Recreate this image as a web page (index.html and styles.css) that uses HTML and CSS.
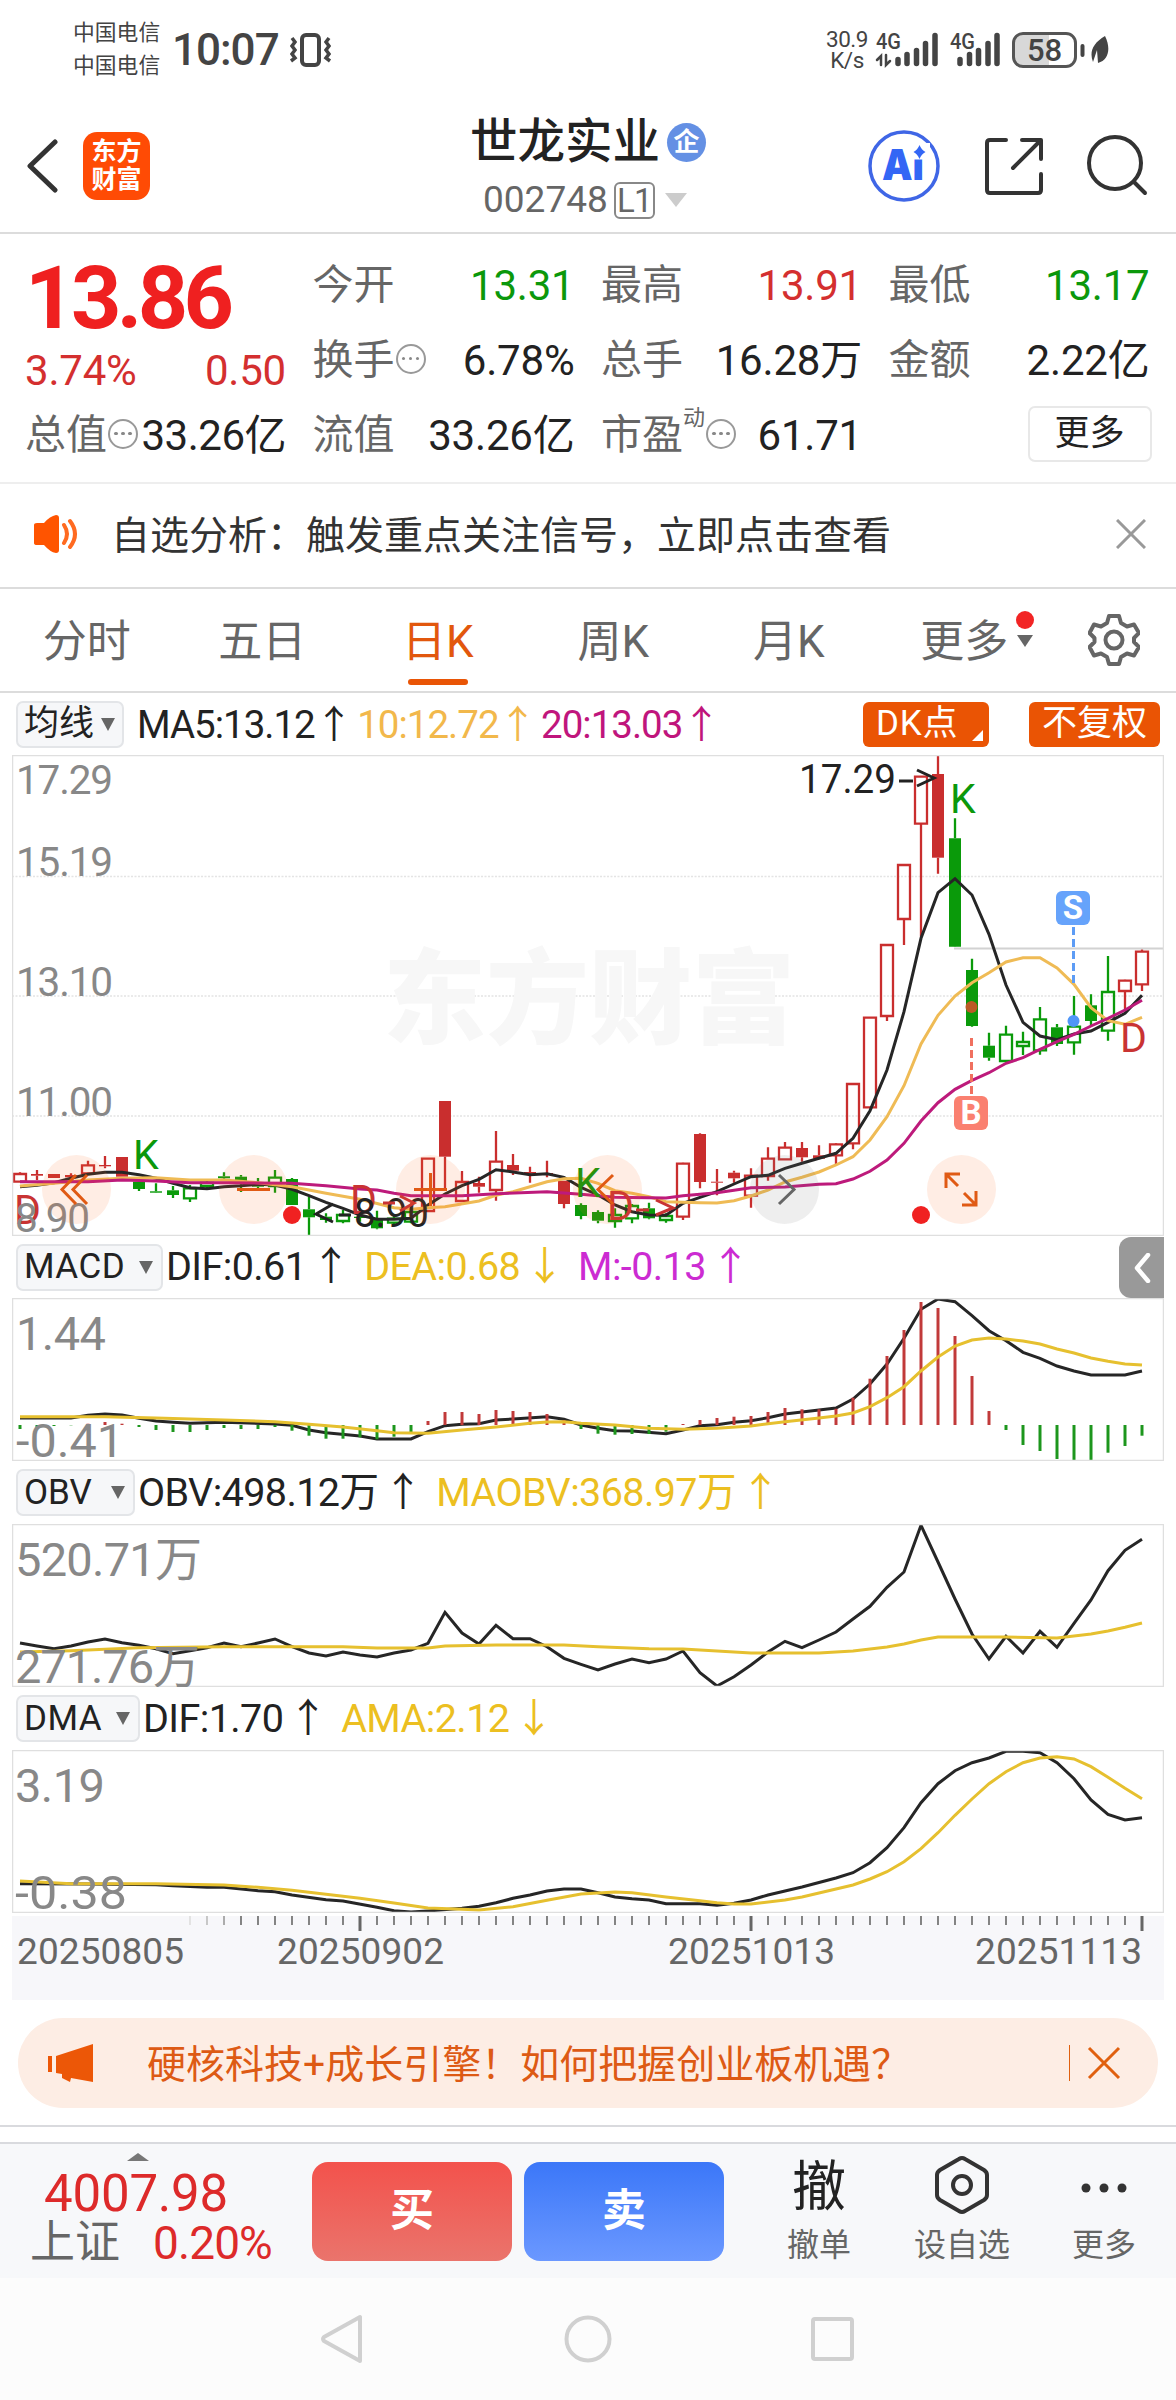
FILE: index.html
```html
<!DOCTYPE html>
<html lang="zh-CN">
<head>
<meta charset="utf-8">
<title>世龙实业 002748</title>
<link rel="stylesheet" href="styles.css">
</head>
<body>
<div class="phone">
  <div class="status">
    <div class="carriers"><span>中国电信</span><span>中国电信</span></div>
    <span class="clock">10:07</span>
    <svg class="vibrate" width="44" height="36" viewBox="0 0 44 36" fill="none" stroke="#444" stroke-width="4"><rect x="13" y="3" width="17" height="30" rx="4"/><path d="M3 6l3 4-3 4 3 4-3 4 3 4-4 3M40 6l-3 4 3 4-3 4 3 4-3 4 4 3" stroke-width="3.500"/></svg>
    <div class="speed"><span>30.9</span><span>K/s</span></div>
    <svg class="signals" width="130" height="46" viewBox="0 0 130 46"><g fill="none" stroke="#444" stroke-width="5.500" stroke-linecap="round"><path d="M24 36.500v-4M33 36.500v-9M42.500 36.500v-13M51.500 36.500v-20M61 36.500v-28M86 36.500v-4M95.500 36.500v-9M104.500 36.500v-13M114 36.500v-20M123 36.500v-28"/><path d="M7 38V29l-4 4M12 28v10l4-4" stroke-width="2.500"/></g><text x="2" y="22" textLength="25" lengthAdjust="spacingAndGlyphs">4G</text><text x="76" y="22" textLength="25" lengthAdjust="spacingAndGlyphs">4G</text></svg>
    <div class="battery"><span>58</span></div>
    <svg class="leaf" width="30" height="36" viewBox="0 0 30 36"><path d="M3.500 14v9" stroke="#444" stroke-width="4" stroke-linecap="round"/><path d="M26 4C14 11 10 20 14 30l4-12 1 13C30 28 32 16 26 4z" fill="#444"/></svg>
  </div>

  <header class="head">
    <svg class="back" width="32" height="58" viewBox="0 0 32 58" fill="none" stroke="#333" stroke-width="5" stroke-linecap="round" stroke-linejoin="round"><path d="M29 5L4 29l25 24"/></svg>
    <div class="logo"><span>东方</span><span>财富</span></div>
    <div class="title">
      <div class="name">世龙实业<i class="badge">企</i></div>
      <div class="code">002748<span class="lv">L1</span><svg width="22" height="16" viewBox="0 0 22 16"><path d="M0 1h22L11 15z" fill="#ccc"/></svg></div>
    </div>
    <svg class="ai" width="72" height="74" viewBox="0 0 72 74"><circle cx="36" cy="37" r="34" fill="none" stroke="#3f66e6" stroke-width="3.500"/><text x="14" y="51" textLength="42" lengthAdjust="spacingAndGlyphs">Ai</text><path d="M42 14h20v16.500H42z" fill="#fff"/><path d="M51.500 16q2 5 6 7-4 2-6 7-2-5-6-7 4-2 6-7z" fill="#3366f5"/></svg>
    <svg class="share" width="62" height="62" viewBox="0 0 62 62" fill="none" stroke="#333" stroke-width="4" stroke-linecap="round" stroke-linejoin="round"><path d="M24 5H8q-3 0-3 3v47q0 3 3 3h48q3 0 3-3V39M40 5h19v19M58 6L31 33"/></svg>
    <svg class="search" width="62" height="62" viewBox="0 0 62 62" fill="none" stroke="#333" stroke-width="4" stroke-linecap="round"><circle cx="29" cy="29" r="26"/><path d="M48 48l11 11"/></svg>
  </header>

  <section class="quote">
    <div class="col first">
      <div class="price">13.86</div>
      <div class="cell chg"><b class="red">3.74%</b><b class="red">0.50</b></div>
      <div class="cell tight"><span>总值</span><i class="tip"></i><b>33.26亿</b></div>
    </div>
    <div class="col">
      <div class="cell"><span>今开</span><b class="green">13.31</b></div>
      <div class="cell"><span>换手</span><i class="tip"></i><b>6.78%</b></div>
      <div class="cell"><span>流值</span><b>33.26亿</b></div>
    </div>
    <div class="col">
      <div class="cell"><span>最高</span><b class="red">13.91</b></div>
      <div class="cell"><span>总手</span><b>16.28万</b></div>
      <div class="cell"><span>市盈<sup>动</sup></span><i class="tip"></i><b>61.71</b></div>
    </div>
    <div class="col">
      <div class="cell"><span>最低</span><b class="green">13.17</b></div>
      <div class="cell"><span>金额</span><b>2.22亿</b></div>
      <div class="cell"><button class="morebtn">更多</button></div>
    </div>
  </section>

  <div class="notice">
    <svg width="46" height="38" viewBox="0 0 46 38"><path d="M1 10q0-2 3-2h7q6-7 12-8 3 0 3 3v32q0 3-3 3-6-1-12-8H4q-3 0-3-2z" fill="#ff5400"/><path d="M31 10q6 9 0 18M37 6q10 13 0 26" fill="none" stroke="#ff6a20" stroke-width="4" stroke-linecap="round"/></svg>
    <span>自选分析：触发重点关注信号，立即点击查看</span>
    <svg class="x" width="30" height="30" viewBox="0 0 30 30" stroke="#999" stroke-width="3"><path d="M1 1l28 28M29 1L1 29"/></svg>
  </div>

  <nav class="tabs">
    <span>分时</span><span>五日</span><span class="on">日K</span><span>周K</span><span>月K</span>
    <span>更多<i class="dot"></i><i class="caret"></i></span>
    <svg width="52" height="54" viewBox="0 0 52 54" fill="none" stroke="#666" stroke-width="4" stroke-linejoin="round"><path d="M21 3h10l2 7 6 3.500 7-2 5 8.500-5 5v4l5 5-5 8.500-7-2-6 3.500-2 7H21l-2-7-6-3.500-7 2L1.500 34l5-5v-4l-5-5L6 11.500l7 2L19 10z"/><circle cx="26" cy="27" r="8.500"/></svg>
  </nav>

  <div class="legend ma">
    <span class="pick">均线<i></i></span>
    <span class="t k">MA5:13.12↑</span><span class="t o">10:12.72↑</span><span class="t m">20:13.03↑</span>
    <span class="tag dk">DK点<i></i></span><span class="tag">不复权</span>
  </div>

  <svg class="plot" width="1152" height="481" viewBox="12 755 1152 481">
    <path d="M12 876.500h1152M12 996h1152M12 1116h1152" stroke="#e4e4e4" stroke-width="1.500" stroke-dasharray="2 1.500"/>
    <text class="water" x="383" y="1036" textLength="412">东方财富</text>
    <g id="candles"></g>
    <path d="M954 948.500h210" stroke="#d2d2d2" stroke-width="2"/>
    <g id="ma"></g>
    <rect x="12.500" y="755.500" width="1151" height="480" fill="none" stroke="#dfdfdf" stroke-width="1.500"/>
    <g class="mark">
      <text class="gr" x="133" y="1169">K</text><text class="gr" x="575" y="1197">K</text><text class="gr" x="950" y="813">K</text>
      <text class="rd" x="14" y="1224">D</text><text class="rd" x="350" y="1214">D</text><text class="rd" x="607" y="1220">D</text><text class="rd" x="1120" y="1052">D</text>
      <text x="799" y="793" textLength="97" lengthAdjust="spacingAndGlyphs">17.29</text>
      <text x="354" y="1227" textLength="75" lengthAdjust="spacingAndGlyphs">8.90</text>
    </g>
    <g fill="none" stroke="#222" stroke-width="3"><path d="M899 781h14M917 770l17 8-17 8M333 1204l-17 10 17 8M339 1215h12"/><path d="M636 1210h13M656 1200l17 8-17 7M383 1203h12M400 1196l14 7-14 8" stroke="#c93333"/></g>
    <g class="axis">
      <text x="16" y="794" textLength="97">17.29</text><text x="16" y="876" textLength="97">15.19</text><text x="16" y="996" textLength="97">13.10</text><text x="16" y="1116" textLength="97">11.00</text><text x="15" y="1232" textLength="75">8.90</text>
    </g>
    <g fill="#ff6a20" fill-opacity=".12"><circle cx="76.500" cy="1189.500" r="34.500"/><circle cx="253.500" cy="1189.500" r="34.500"/><circle cx="430.500" cy="1189.500" r="34.500"/><circle cx="607.500" cy="1189.500" r="34.500"/><circle cx="961.500" cy="1189.500" r="34.500"/><circle cx="784.500" cy="1189.500" r="34.500" fill="#777"/></g>
    <g fill="none" stroke="#e05a14" stroke-width="3"><path d="M76 1175l-14 14.500 14 14.500M87 1175l-14 14.500 14 14.500M237 1189.500h33M414 1189.500h33M430.500 1173v33M613 1175l-15 14.500 15 14.500M958 1186l-12-12M946 1188v-14h14M964 1193l12 12M976 1191v14h-14"/><path d="M779 1175l15 14.500-15 14.500" stroke="#666"/></g>
    <g fill="#f02121"><circle cx="292" cy="1215" r="9"/><circle cx="921" cy="1215" r="9"/></g>
    <path d="M1073.500 927v56" stroke="#5d9cf5" stroke-width="3" stroke-dasharray="8 4"/>
    <path d="M971.500 1038v56" stroke="#f0705f" stroke-width="3" stroke-dasharray="8 4"/>
    <circle cx="1073.500" cy="1021" r="6" fill="#4f96f8"/><circle cx="971.500" cy="1007" r="6" fill="#bb5a26"/>
    <rect x="1056" y="891" width="34" height="34" rx="6" fill="#66a3fb"/><rect x="954" y="1096" width="34" height="34" rx="6" fill="#fa8070"/>
    <g class="sig"><text x="1073" y="919">S</text><text x="971" y="1124">B</text></g>
  </svg>

  <div class="legend first">
    <span class="pick w1">MACD<i></i></span>
    <span class="t k">DIF:0.61<u>↑</u></span><span class="t y">DEA:0.68<u>↓</u></span><span class="t p">M:-0.13<u>↑</u></span>
    <span class="fold"><svg width="18" height="30" viewBox="0 0 18 30" fill="none" stroke="#fff" stroke-width="4.500" stroke-linecap="round" stroke-linejoin="round"><path d="M15 2L4 15l11 13"/></svg></span>
  </div>
  <svg class="plot" width="1152" height="163" viewBox="12 1298 1152 163">
    <g id="macd"></g><rect x="12.500" y="1298.500" width="1151" height="162" fill="none" stroke="#dfdfdf" stroke-width="1.500"/>
    <g class="axis big"><text x="16" y="1350" textLength="90">1.44</text><text x="16" y="1457" textLength="108" lengthAdjust="spacingAndGlyphs">-0.41</text></g>
  </svg>

  <div class="legend">
    <span class="pick w2">OBV<i></i></span>
    <span class="t k">OBV:498.12万<u>↑</u></span><span class="t y">MAOBV:368.97万<u>↑</u></span>
  </div>
  <svg class="plot" width="1152" height="163" viewBox="12 1524 1152 163">
    <g id="obv"></g><rect x="12.500" y="1524.500" width="1151" height="162" fill="none" stroke="#dfdfdf" stroke-width="1.500"/>
    <g class="axis big"><text x="15" y="1576" textLength="187">520.71万</text><text x="15" y="1683" textLength="185">271.76万</text></g>
  </svg>

  <div class="legend">
    <span class="pick w3">DMA<i></i></span>
    <span class="t k">DIF:1.70<u>↑</u></span><span class="t y">AMA:2.12<u>↓</u></span>
  </div>
  <svg class="plot" width="1152" height="163" viewBox="12 1750 1152 163">
    <g id="dma"></g><rect x="12.500" y="1750.500" width="1151" height="162" fill="none" stroke="#dfdfdf" stroke-width="1.500"/>
    <g class="axis big"><text x="15" y="1802" textLength="90">3.19</text><text x="15" y="1909" textLength="112" lengthAdjust="spacingAndGlyphs">-0.38</text></g>
  </svg>

  <svg class="dates" width="1152" height="84" viewBox="12 1916 1152 84">
    <g id="ticks"></g>
    <text x="17" y="1964" textLength="167">20250805</text><text x="277" y="1964" textLength="167">20250902</text><text x="668" y="1964" textLength="167">20251013</text><text x="975" y="1964" textLength="167">20251113</text>
  </svg>

  <div class="banner">
    <svg width="48" height="40" viewBox="0 0 48 40" fill="#ec5707"><path d="M1 13h4v16H1zM9 13L46 1v38l-22-4-1 4-8-4v-4l-6-1z"/></svg>
    <span>硬核科技+成长引擎！如何把握创业板机遇？</span>
    <i></i>
    <svg width="34" height="34" viewBox="0 0 34 34" stroke="#e0600f" stroke-width="3"><path d="M2 2l30 30M32 2L2 32"/></svg>
  </div>

  <footer class="bar">
    <div class="index">
      <svg width="22" height="8" viewBox="0 0 22 8"><path d="M0 8L11 0l11 8z" fill="#777"/></svg>
      <b>4007.98</b>
      <div><span>上证</span><em>0.20%</em></div>
    </div>
    <button class="buy">买</button><button class="sell">卖</button>
    <div class="act a1"><b>撤</b><span>撤单</span></div>
    <div class="act a2"><svg width="56" height="60" viewBox="0 0 56 60" fill="none" stroke="#333" stroke-width="4" stroke-linejoin="round"><path d="M25 4q3-2 6 0l19 11q3 2 3 5v20q0 3-3 5L31 56q-3 2-6 0L6 45q-3-2-3-5V20q0-3 3-5z"/><circle cx="28" cy="30" r="9"/></svg><span>设自选</span></div>
    <div class="act a3"><svg width="56" height="60" viewBox="0 0 56 60" fill="#333"><circle cx="10" cy="33" r="4.500"/><circle cx="28" cy="33" r="4.500"/><circle cx="46" cy="33" r="4.500"/></svg><span>更多</span></div>
  </footer>
  <div class="keys">
    <svg width="46" height="50" viewBox="0 0 46 50"><path d="M40 3v44L4 27q-2-2 0-4z"/></svg>
    <svg width="50" height="50" viewBox="0 0 50 50"><circle cx="25" cy="25" r="21.500"/></svg>
    <svg width="46" height="50" viewBox="0 0 46 50"><rect x="3" y="5" width="39" height="40" rx="2"/></svg>
  </div>
</div>
<script src="chart.js"></script>
</body>
</html>
```
FILE: styles.css
```css
* { box-sizing: border-box; }
body { margin: 0; background: #fff; font-family: Roboto, "Noto Sans CJK SC", sans-serif; color: #222; }
i, em { font-style: normal; }
u { text-decoration: none; margin: 0 4px 0 5px; }
b { font-weight: 400; }
button { font: inherit; border: 0; padding: 0; margin: 0; }
svg { display: block; flex: none; }
.phone { width: 1176px; height: 2400px; overflow: hidden; display: flex; flex-direction: column; }
.phone > * { flex: none; }
.red { color: #d42f2f; }
.green { color: #0b980b; }

.status { height: 100px; display: flex; align-items: center; padding: 0 67px 0 73px; color: #444; }
.carriers { display: flex; flex-direction: column; font-size: 21.8px; line-height: 33px; width: 99px; padding-bottom: 2px; }
.clock { font-size: 44px; font-weight: 500; letter-spacing: -1px; width: 117px; line-height: 98px; }
.vibrate { margin-right: auto; }
.speed { display: flex; flex-direction: column; font-size: 22.5px; line-height: 21px; text-align: center; width: 44px; margin-right: 5px; letter-spacing: -0.5px; }
.signals { margin-right: 8px; }
.signals text { font-size: 22px; font-weight: 500; fill: #444; }
.battery { width: 65px; height: 36px; border: 3px solid #555; border-radius: 11px; background: linear-gradient(90deg, #d8d8d8 58%, #fff 58%); font-size: 31px; font-weight: 500; line-height: 31px; text-align: center; margin-right: 2px; }

.head { height: 134px; border-bottom: 2px solid #dcdcdc; display: flex; padding: 0 28px 0 26px; align-items: flex-start; }
.back { margin-top: 37px; }
.logo { width: 67px; height: 68px; margin: 32px 0 0 25px; border-radius: 14px; background: #ff4b05; color: #fff; font-size: 25px; font-weight: 700; line-height: 28px; padding-top: 6px; display: flex; flex-direction: column; align-items: center; }
.title { flex: 1; padding-left: 320px; }
.name { font-size: 47.5px; font-weight: 500; line-height: 60px; padding-top: 12px; display: flex; align-items: center; }
.badge { width: 39px; height: 39px; border-radius: 50%; background: #6490e4; color: #fff; font-size: 26px; line-height: 38px; text-align: center; margin-left: 7px; font-weight: 700; }
.code { display: flex; align-items: center; font-size: 37px; line-height: 56px; color: #666; padding-left: 13px; }
.lv { border: 2px solid #888; border-radius: 6px; width: 41px; height: 37px; line-height: 34px; font-size: 33px; text-align: center; letter-spacing: -1px; margin: 0 10px 0 6px; }
.ai { margin: 29px 42px 0 0; }
.ai text { font-family: Inter, sans-serif; font-size: 42px; font-weight: 900; fill: #3366f5; }
.share { margin: 35px 42px 0 0; }
.search { margin-top: 34px; }

.quote { height: 250px; border-bottom: 2px solid #eee; padding: 14px 26px 0 25px; display: grid; grid-template-columns: 261px 262px 261px 261px; column-gap: 26.5px; }
.cell { height: 75px; display: flex; align-items: center; font-size: 42px; line-height: 75px; letter-spacing: -0.2px; white-space: nowrap; }
.cell span { color: #666; letter-spacing: 0; font-size: 41px; }
.cell b { margin-left: auto; }
.tight b { letter-spacing: -0.5px; }
.price { font-size: 88px; font-weight: 700; letter-spacing: -4.6px; line-height: 100px; color: #ef2020; height: 92px; padding-left: 0; }
.cell.chg { height: 58px; justify-content: space-between; line-height: 62px; padding-top: 3px; }
.chg b { margin: 0; }
.tip { width: 30px; height: 30px; border: 2px solid #999; border-radius: 50%; margin: -4px 0 0 1px; display: flex; align-items: center; justify-content: center; flex: none; }
.tip::before { content: ""; width: 3.5px; height: 3.5px; border-radius: 50%; background: #888; box-shadow: -7px 0 #888, 7px 0 #888; }
.cell sup { font-size: 22px; line-height: 0; vertical-align: 24px; }
.morebtn { width: 124px; height: 56px; margin: -4px -2px 0 auto; background: #fff; border: 2px solid #e8e8e8; border-radius: 7px; font-size: 35px; line-height: 50px; color: #222; }

.notice { height: 105px; border-bottom: 2px solid #dcdcdc; display: flex; align-items: center; padding: 0 30px 3px 33px; font-size: 39px; color: #333; }
.notice span { margin: -5px 0 0 32px; }
.notice .x { margin-left: auto; }

.tabs { height: 104px; border-bottom: 2px solid #dcdcdc; display: flex; align-items: center; font-size: 44px; color: #666; }
.tabs span { width: 175.5px; text-align: center; line-height: 107px; height: 102px; position: relative; left: -1px; }
.tabs .on { color: #e2570d; }
.tabs .on::after { content: ""; position: absolute; left: 58px; bottom: 6px; width: 60px; height: 6px; border-radius: 3px; background: #e95506; }
.tabs svg { margin-left: 35px; }
.dot { position: absolute; left: 139px; top: 22px; width: 18px; height: 18px; border-radius: 50%; background: #f22424; }
.caret { position: absolute; left: 140px; top: 46px; border: 8px solid transparent; border-top: 12px solid #666; border-bottom: 0; }

.legend { height: 63px; display: flex; align-items: center; padding: 0 16px; position: relative; white-space: nowrap; }
.legend.ma, .legend.first { height: 62px; }
.pick { height: 47px; border: 2px solid #e3e5e8; border-radius: 7px; background: #f6f7f9; padding: 0 6px; font-size: 35px; line-height: 42px; display: flex; align-items: center; justify-content: space-between; }
.pick i { border: 7.5px solid transparent; border-top: 13px solid #666; border-bottom: 0; }
.ma .pick { width: 108px; margin-right: 13px; padding: 0 7px 0 6px; }
.w1 { width: 147px; margin-right: 3px; padding-right: 8px; letter-spacing: 0.5px; }
.w2 { width: 119px; margin-right: 3px; padding-right: 8px; }
.w3 { width: 124px; margin-right: 3px; padding-right: 8px; letter-spacing: 0.5px; }
.t { font-size: 39.5px; letter-spacing: -0.6px; line-height: 59px; margin: -1px 10px 0 0; }
.ma .t { font-size: 38.5px; letter-spacing: -1px; margin-right: 5px; line-height: 61px; margin-top: 0; }
.k { color: #222; } .o { color: #f2b84b; } .m { color: #c0157c; } .y { color: #ecbf21; } .p { color: #cc2bd2; }
.tag { background: #ea5404; color: #fff; border-radius: 6px; height: 45px; line-height: 43px; font-size: 35px; padding: 0 13px; position: relative; }
.dk { margin-left: auto; margin-right: 40px; width: 126px; letter-spacing: 0.8px; }
.dk i { position: absolute; right: 6px; bottom: 6px; border-bottom: 11px solid #fff; border-left: 11px solid transparent; }
.fold { position: absolute; right: 12px; top: 1px; width: 45px; height: 61px; border-radius: 12px 0 0 12px; background: #999; display: flex; align-items: center; justify-content: center; }

.plot { margin-left: 12px; }
.water { font-size: 103px; font-weight: 900; fill: #f7f7f7; }
.mark text { font-size: 41px; fill: #222; }
.mark .gr { fill: #0b980b; }
.mark .rd { fill: #c93333; }
.axis text { font-size: 40.5px; fill: #888; }
.axis.big text { font-size: 47px; }
.sig text { font-size: 33px; font-weight: 700; fill: #fff; text-anchor: middle; }
.dates { margin: 3px 0 0 12px; background: #f7f7fa; }
.dates text { font-size: 37px; fill: #666; }

.banner { margin: 18px 18px 0; height: 90px; border-radius: 45px; background: #fdede4; display: flex; align-items: center; padding: 0 37px 0 29px; color: #dd5a14; font-size: 39px; }
.banner span { margin: -5px 0 0 52px; }
.banner i { width: 1.5px; height: 36px; background: #e0600f; margin: 0 17px 0 auto; }

.bar { margin-top: 17px; height: 153px; border-top: 2px solid #d9dade; background: linear-gradient(#fff 0 15px, #d9dade 15px 17px, #f7f8fa 17px); padding: 16px 0 0; display: flex; }
.index { width: 312px; position: relative; display: flex; flex-direction: column; }
.index svg { margin: 10px 0 0 127px; }
.index b { font-size: 51px; line-height: 58px; margin: 4px 0 0 44px; letter-spacing: -0.2px; color: #dd2a2a; }
.index div { display: flex; align-items: center; padding-left: 30px; line-height: 44px; margin-top: -2px; }
.index span { font-size: 45px; color: #666; }
.index em { font-size: 46px; margin-left: 33px; color: #dd2a2a; letter-spacing: -0.9px; }
.bar button { width: 200px; height: 99px; border-radius: 16px; margin: 19px 12px 0 0; color: #fff; font-size: 44px; font-weight: 700; line-height: 97px; }
.buy { background: linear-gradient(#f3524c, #ea746c); }
.sell { background: linear-gradient(#3b77f8, #6b98ff); }
.act { display: flex; flex-direction: column; align-items: center; font-size: 32px; color: #666; padding-top: 12px; height: 136px; }
.act b { font-size: 54px; line-height: 64px; color: #222; padding-top: 1px; height: 64px; }
.act svg { margin-bottom: 4px; }
.act span { line-height: 53px; }
.a1 { width: 146px; margin-left: 10px; }
.a2 { width: 140px; }
.a3 { width: 144px; }
.keys { height: 122px; background: #fcfcfc; display: flex; align-items: center; padding-left: 320px; gap: 197px; }
.keys svg { fill: none; stroke: #d0d0d0; stroke-width: 4; stroke-linejoin: round; }
```
FILE: chart.js
```js
// Sessions are 17px apart, starting at x=20; heights are kept in thirds of a pixel.
const NS = 'http://www.w3.org/2000/svg';
const X = i => 20 + 17 * i;
const Y = (base, v) => +(base + v / 3).toFixed(1);

function path(host, d, stroke, width, fill = 'none') {
  const p = document.createElementNS(NS, 'path');
  p.setAttribute('d', d);
  p.setAttribute('stroke', stroke);
  p.setAttribute('stroke-width', width);
  p.setAttribute('fill', fill);
  document.getElementById(host).appendChild(p);
}

function line(host, base, color, text) {
  const d = text.split(' ').map(s => s.split(':').map(Number))
    .map(([i, v], n) => (n ? 'L' : 'M') + X(i) + ' ' + Y(base, v)).join('');
  path(host, d, color, 3);
}

// kind (R/G solid, r/g hollow), body top, body bottom, high, low
const candles = `r 1302 1325 1297 1326,R 1302 1307 1290 1320,R 1302 1314 1302 1314,R 1305 1312 1300 1316,r 1276 1300 1262 1302,R 1275 1279 1248 1285,R 1251 1310 1251 1310,G 1325 1347 1322 1353,G 1354 1358 1330 1359,G 1351 1365 1338 1374,g 1345 1375 1335 1386,g 1328 1338 1322 1345,G 1309 1315 1297 1322,G 1310 1325 1305 1356,G 1334 1340 1314 1350,g 1313 1338 1290 1358,G 1317 1395 1314 1395,G 1408 1432 1370 1488,G 1430 1440 1420 1448,g 1425 1443 1410 1450,G 1430 1434 1405 1445,G 1440 1465 1412 1468,g 1436 1448 1425 1453,g 1416 1445 1410 1450,r 1256 1413 1256 1415,R 1083 1250 1083 1345,r 1326 1383 1293 1385,R 1329 1340 1310 1358,r 1265 1350 1173 1382,R 1275 1292 1242 1305,R 1296 1300 1280 1328,R 1299 1303 1262 1312,R 1322 1392 1322 1405,G 1395 1428 1390 1438,G 1416 1442 1411 1450,g 1425 1443 1405 1463,g 1398 1435 1392 1450,G 1405 1435 1388 1438,g 1428 1440 1420 1448,r 1271 1430 1268 1440,R 1182 1326 1180 1345,R 1325 1328 1287 1366,R 1298 1315 1292 1328,r 1307 1367 1285 1403,r 1256 1308 1222 1322,r 1223 1258 1206 1260,R 1224 1252 1206 1265,R 1246 1256 1216 1258,r 1213 1246 1210 1272,r 1032 1210 1029 1228,r 833 1102 831 1103,r 615 828 613 843,r 375 537 373 615,r 110 251 108 590,R 102 353 48 401,G 295 620 235 621,G 690 858 656 860,G 917 953 878 962,g 884 963 857 965,g 906 918 875 945,g 838 931 801 944,G 862 912 852 918,g 860 907 768 944,G 796 843 763 860,g 756 872 648 902,r 722 753 719 808,r 635 733 628 753`;
candles.split(',').forEach((row, i) => {
  const [kind, ...n] = row.split(' ');
  const [top, bottom, high, low] = n.map(v => Y(740, +v));
  const color = /r/i.test(kind) ? '#c92e2e' : '#0a9a0a';
  const x = X(i);
  path('candles', `M${x} ${high}V${top}M${x} ${bottom}V${low}`, color, 2.3);
  if (kind < 'a') path('candles', `M${x - 6} ${top}h12V${bottom}h-12z`, 'none', 0, color);
  else path('candles', `M${x - 6} ${top}h12V${bottom}h-12z`, color, 2.3);
});

line('ma', 740, '#262626', '0:1340 1:1336 2:1328 3:1315 4:1303 5:1297 6:1297 7:1304 8:1315 9:1330 10:1343 11:1346 12:1340 13:1337 14:1333 15:1335 16:1348 17:1367 18:1387 19:1405 20:1425 21:1438 22:1438 23:1435 24:1395 25:1362 26:1337 27:1318 28:1289 29:1296 30:1304 31:1301 32:1312 33:1342 34:1365 35:1395 36:1415 37:1425 38:1426 39:1390 40:1372 41:1355 42:1332 43:1310 44:1306 45:1285 46:1270 47:1255 48:1240 49:1195 50:1112 51:990 52:815 53:595 54:458 55:416 56:465 57:583 58:735 59:847 60:888 61:899 62:882 63:873 64:847 65:820 66:766');
line('ma', 740, '#efbb55', '0:1338 2:1330 4:1320 6:1315 8:1313 10:1320 12:1320 14:1328 16:1340 18:1360 20:1378 22:1403 23:1408 24:1403 25:1400 27:1383 28:1366 29:1355 31:1325 32:1316 33:1315 34:1330 35:1352 36:1360 37:1370 38:1385 39:1387 40:1388 41:1389 42:1382 43:1368 44:1350 45:1326 46:1312 47:1296 48:1275 49:1250 50:1200 51:1130 52:1037 53:912 54:826 55:768 56:728 57:698 58:666 59:653 60:653 61:684 62:733 63:803 64:842 65:853 66:832');
line('ma', 740, '#bd1a7b', '0:1325 4:1325 6:1320 8:1323 10:1328 12:1328 16:1330 18:1337 20:1347 21:1350 22:1360 23:1367 26:1367 28:1361 31:1355 33:1363 35:1372 38:1374 39:1367 41:1358 43:1343 45:1341 47:1333 48:1331 49:1317 50:1294 51:1260 52:1210 53:1143 54:1088 55:1048 56:1021 57:998 58:970 59:953 60:928 61:905 62:883 63:858 64:835 65:810 66:781');

line('macd', 1230, '#262626', '0:564 3:564 4:556 5:552 6:555 7:565 8:573 9:577 10:580 12:577 15:582 16:586 17:600 18:608 20:618 21:627 23:627 24:605 25:587 26:583 27:581 28:570 29:567 31:560 32:568 33:585 34:595 35:602 36:603 38:611 39:600 40:587 41:584 42:577 43:572 44:563 45:552 46:546 47:540 48:534 49:507 50:462 51:402 52:325 53:238 54:207 55:215 56:257 57:302 58:332 59:367 60:385 61:408 62:423 63:435 65:435 66:423');
const bars = [597, 592, 588, 586, 581, 576, 581, 591, 600, 606, 606, 600, 594, 597, 597, 591, 602, 617, 626, 626, 622, 628, 620, 608, 573, 546, 546, 552, 540, 543, 546, 552, 570, 597, 611, 614, 612, 612, 605, 582, 570, 564, 560, 558, 546, 534, 538, 538, 536, 503, 446, 378, 300, 216, 234, 318, 438, 543, 600, 645, 663, 687, 692, 690, 668, 648, 617];
bars.forEach((v, i) => path('macd', `M${X(i)} 1425V${Y(1230, v)}`, v < 585 ? '#c13a3a' : '#1d961d', 3));
line('macd', 1230, '#e6c02f', '0:560 5:560 8:564 12:570 15:575 17:583 19:591 21:602 22:608 24:610 26:600 28:591 30:580 31:576 32:575 33:580 35:585 37:595 39:598 41:595 43:588 45:575 47:564 48:558 49:549 50:530 51:503 52:470 53:423 54:381 55:348 56:330 57:324 58:327 59:333 60:342 61:357 62:369 63:384 64:394 65:402 66:405');

line('obv', 1230, '#262626', '0:1239 1:1248 2:1256 3:1248 4:1236 5:1227 6:1238 7:1246 8:1256 9:1271 10:1262 11:1253 12:1239 13:1250 14:1239 15:1227 16:1250 17:1269 18:1278 19:1266 20:1275 21:1281 22:1269 23:1260 24:1240 25:1147 26:1209 27:1242 28:1186 29:1226 30:1226 31:1250 32:1285 33:1303 34:1320 35:1302 36:1287 37:1298 38:1287 39:1263 40:1328 41:1368 42:1340 43:1305 44:1266 45:1234 46:1253 47:1230 48:1206 49:1167 50:1129 51:1072 52:1026 53:886 54:996 55:1107 56:1212 57:1287 58:1219 59:1269 60:1204 61:1252 62:1180 63:1110 64:1022 65:961 66:928');
line('obv', 1230, '#e6c02f', '0:1266 3:1262 7:1253 12:1250 19:1250 21:1254 24:1254 25:1248 28:1245 32:1245 34:1250 37:1256 39:1257 43:1269 47:1269 49:1263 51:1251 52:1242 53:1230 54:1221 58:1221 61:1224 63:1212 64:1203 65:1192 66:1179');

line('dma', 1680, '#262626', '0:611 4:612 8:614 9:617 11:622 12:622 14:632 15:635 16:645 18:659 19:663 21:682 22:692 23:696 24:693 26:685 27:679 28:668 29:655 30:645 31:633 32:627 33:627 34:638 35:651 36:656 37:660 38:671 40:671 41:676 42:670 43:660 44:645 45:633 46:621 48:594 49:578 50:548 51:503 52:443 53:368 54:311 55:272 56:248 57:234 58:214 59:214 60:218 61:248 62:296 63:360 64:403 65:420 66:413');
line('dma', 1680, '#e6c02f', '0:603 3:611 8:611 12:615 14:622 16:631 20:655 22:669 24:684 26:688 27:690 29:680 31:661 33:642 35:636 36:638 38:651 40:662 41:668 42:672 43:672 45:660 46:651 47:639 49:615 50:597 51:575 52:545 53:506 54:458 55:406 56:357 57:311 58:275 59:248 60:234 61:230 62:237 63:260 64:292 65:325 66:356');

for (let i = 10; i <= 66; i++) {
  const major = i === 20 || i === 43 || i === 66;
  const shade = i === 10 ? '#ddd' : i === 11 ? '#bbb' : i === 12 ? '#999' : '#666';
  path('ticks', `M${X(i)} 1916V${major ? 1931 : 1925}`, shade, major ? 3 : 1.6);
}
```
